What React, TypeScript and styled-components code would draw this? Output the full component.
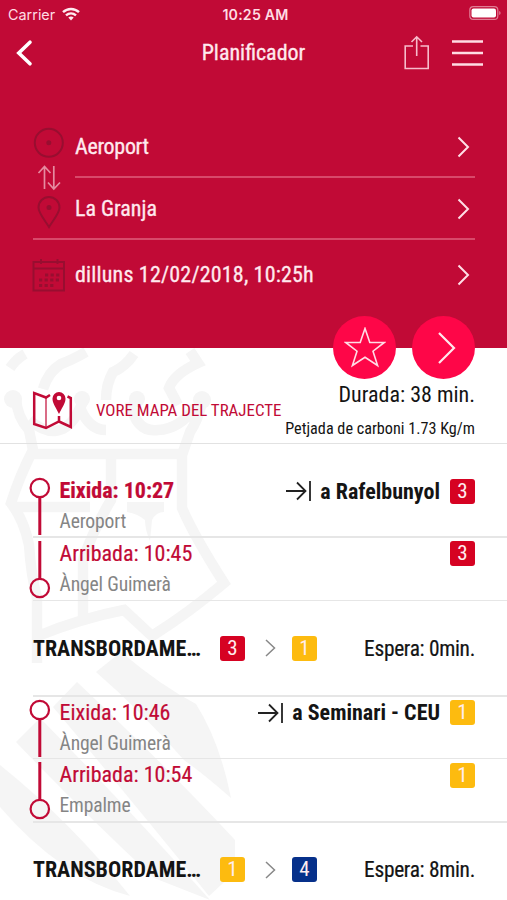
import React from 'react';
import styled, { createGlobalStyle } from 'styled-components';

const Global = createGlobalStyle`
  * { box-sizing: border-box; }
  body { margin: 0; background: #fff; }
`;
const crimson = '#c10a36';

const Screen = styled.div`
  width: 507px; height: 900px; overflow: hidden; position: relative; background: #fff; color: #141414;
  font-family: 'Roboto Condensed', Roboto, sans-serif; font-stretch: 75%; font-size: 22px;
`;
const Header = styled.header`
  height: 348px; background: ${crimson}; color: #ffe9ee;
`;
const StatusBar = styled.div`
  height: 28px; display: grid; grid-template-columns: 1fr auto 1fr; align-items: center; padding: 0 6px 0 8px;
  font-family: Inter, sans-serif; font-stretch: 100%; font-size: 14.4px; color: #ffdce4;
`;
const Carrier = styled.div`display: flex; align-items: center; gap: 7px;`;
const Clock = styled.div`font-weight: 600; font-size: 14.2px; letter-spacing: 0.2px; padding-left: 2px;`;
const Battery = styled.svg`justify-self: end; margin-top: -2px;`;
const NavBar = styled.nav`
  height: 49px; display: grid; grid-template-columns: 60px 1fr 46px 57px; align-items: center;
`;
const BackIcon = styled.svg`margin-left: 15px;`;
const Title = styled.h1`
  margin: 0; text-align: center; font-size: 22px; font-weight: 400; line-height: 48px; padding-left: 43px;
  -webkit-text-stroke: 0.3px;
`;
const Form = styled.section`
  display: grid; grid-template-columns: 42px 1fr; margin: 39px 32px 0 33px; -webkit-text-stroke: 0.3px;
`;
const RouteIcons = styled.svg`margin-left: -1px; grid-row: span 2;`;
const Field = styled.div<{ $h: number; $line?: boolean; $track?: number }>`
  height: ${p => p.$h}px; display: flex; justify-content: space-between; align-items: center;
  padding: ${p => (p.$line ? '1px 5px 0 0' : '0 5px 1px 0')}; letter-spacing: ${p => p.$track ?? 0}px;
  border-bottom: ${p => (p.$line ? '2px solid #d8496a' : '0')};
`;
const Divider = styled.div`grid-column: 1 / -1; height: 2px; background: #d8496a; margin-top: -2px;`;
const CalendarIcon = styled.svg`margin: 19px 0 0 -1px;`;
const Summary = styled.section`
  height: 96px; border-bottom: 1.5px solid #e2e2e2; display: flex; padding-left: 32px; position: relative;
`;
const MapLink = styled.a`
  display: flex; align-items: center; gap: 23px; color: ${crimson}; font-size: 16.9px; padding-top: 29px; white-space: nowrap;
`;
const Totals = styled.div`
  flex: 1; min-width: 0; padding: 33px 32px 0 0; white-space: nowrap;
  display: flex; flex-direction: column; align-items: flex-end;
`;
const Duration = styled.div`font-size: 22px; line-height: 28px;`;
const Carbon = styled.div`font-size: 16.2px; line-height: 20px; margin-top: 10px;`;
const Actions = styled.div`position: absolute; top: -32px; right: 32px; display: flex; gap: 16px;`;
const RoundButton = styled.button`
  width: 63px; height: 63px; border: 0; border-radius: 50%; background: #fe0648; padding: 0; display: grid; place-items: center;
`;
const Content = styled.main`position: relative; z-index: 0; height: 552px;`;
const Watermark = styled.svg`position: absolute; left: 0; top: 0; z-index: -1;`;
const Stop = styled.div<{ $lead?: boolean; $h: number }>`
  height: ${p => p.$h}px; padding: ${p => (p.$lead ? 31 : 0)}px 32px 0 29px; display: flex;
`;
const Rule = styled.div`height: 1.5px; margin-left: 33px; background: #e6e6e6;`;
const Track = styled.svg`flex: none;`;
const Info = styled.div`padding: 2px 0 0 8.5px; white-space: nowrap;`;
const Time = styled.div<{ $bold?: boolean }>`
  color: ${crimson}; font-size: 22px; line-height: 28px; font-weight: ${p => (p.$bold ? 700 : 400)};
  -webkit-text-stroke: 0.2px;
`;
const Station = styled.div`color: #858585; font-size: 19.6px; letter-spacing: -0.15px; line-height: 26px; margin-top: 4px;`;
const Destination = styled.div`
  margin-left: auto; padding-top: 3px; display: flex; align-items: center; height: 29px; font-weight: 700; white-space: nowrap;
`;
const DestName = styled.span`margin: 0 10px 0 9px;`;
const Badge = styled.span<{ $color: string }>`
  width: 25px; height: 25px; border-radius: 3px; background: ${p => p.$color}; color: #ffedf0;
  font-size: 21px; line-height: 25px; text-align: center; font-weight: 400; flex: none;
`;
const Transfer = styled.div`height: 94px; margin-left: 33px; padding-right: 32px; display: flex; align-items: center;`;
const TransferLabel = styled.div`
  width: 170px; margin-right: 17px; font-weight: 700; white-space: nowrap;
`;
const TransferArrow = styled.svg`margin: 0 15px 0 19px;`;
const Wait = styled.div`margin-left: auto; white-space: nowrap; font-size: 21.4px; letter-spacing: -0.3px; -webkit-text-stroke: 0.2px;`;

const RED = '#d60222', YELLOW = '#fdbb0f', NAVY = '#06308a';

const Chevron = () => (
  <svg width="13" height="22" viewBox="0 0 13 22" fill="none" stroke="#ffdfe7" strokeWidth="2"><path d="M1.5 1.5L11 11L1.5 20.5" /></svg>
);

const Departure = ({ time, station, to, line, color, first }: { time: string; station: string; to: string; line: number; color: string; first?: boolean }) => (
  <Stop $lead={first} $h={first ? 92 : 61}>
    <Track width="22" height="61" viewBox="0 0 22 61" fill="none" stroke={crimson}>
      <circle cx="10.8" cy="13" r="9.2" strokeWidth="2.2" /><path d="M10.8 22V60" strokeWidth="3" />
    </Track>
    <Info><Time $bold={first}>Eixida: {time}</Time><Station>{station}</Station></Info>
    <Destination>
      <svg width="26" height="22" viewBox="0 0 26 22" fill="none" stroke="#222" strokeWidth="1.8"><path d="M1 11H20M12 2.5L20.5 11L12 19.5M25 1V21" /></svg>
      <DestName>a {to}</DestName><Badge $color={color}>{line}</Badge>
    </Destination>
  </Stop>
);
const Arrival = ({ time, station, line, color }: { time: string; station: string; line: number; color: string }) => (
  <Stop $h={62}>
    <Track width="22" height="62" viewBox="0 0 22 62" fill="none" stroke={crimson}>
      <circle cx="10.8" cy="50" r="9.2" strokeWidth="2.2" /><path d="M10.8 3V41" strokeWidth="3" />
    </Track>
    <Info><Time>Arribada: {time}</Time><Station>{station}</Station></Info>
    <Destination><Badge $color={color}>{line}</Badge></Destination>
  </Stop>
);
const Change = ({ from, to, wait }: { from: [number, string]; to: [number, string]; wait: string }) => (
  <Transfer>
    <TransferLabel>TRANSBORDAME…</TransferLabel>
    <Badge $color={from[1]}>{from[0]}</Badge>
    <TransferArrow width="13" height="20" viewBox="0 0 13 20" fill="none" stroke="#888" strokeWidth="1.5"><path d="M2 2L10.5 10L2 18" /></TransferArrow>
    <Badge $color={to[1]}>{to[0]}</Badge>
    <Wait>Espera: {wait}</Wait>
  </Transfer>
);

export default function App() {
  return (
    <Screen>
      <Global />
      <Header>
        <StatusBar>
          <Carrier>Carrier
            <svg width="18" height="14" viewBox="0 0 18 14" fill="none" stroke="#ffeaf0" strokeWidth="2.4"><path d="M1 5.2C5.5 .9 12.5 .9 17 5.2M4 8.4C7 5.7 11 5.7 14 8.4" /><path d="M6.3 10.6Q9 8.6 11.7 10.6L9 13.4Z" fill="#ffeaf0" stroke="none" /></svg>
          </Carrier>
          <Clock>10:25 AM</Clock>
          <Battery width="32" height="14" viewBox="0 0 32 14"><rect x=".8" y=".6" width="28" height="12.8" rx="3.5" fill="none" stroke="#e07c94" strokeWidth="1.2" /><rect x="2.5" y="2.4" width="24.5" height="9.2" rx="2" fill="#fff" /><path d="M30.2 5v4q1.4-.7 1.4-2t-1.4-2" fill="#e07c94" /></Battery>
        </StatusBar>
        <NavBar>
          <BackIcon width="18" height="28" viewBox="0 0 18 28" fill="none" stroke="#fff" strokeWidth="3.6" strokeLinecap="round"><path d="M15 3.2L3.8 14L15 24.8" /></BackIcon>
          <Title>Planificador</Title>
          <svg width="26" height="36" viewBox="0 0 26 36" fill="none" stroke="#f7bccb" strokeWidth="1.6"><path d="M9 11H1.2V33.5H24.2V11H16.5M12.7 21V2M7.5 7L12.7 1.8L18 7" /></svg>
          <svg width="36" height="30" viewBox="0 0 36 30" stroke="#ffdce4" strokeWidth="2.5"><path d="M2 3.5H33M2 15H33M2 26.5H33" /></svg>
        </NavBar>
        <Form>
          <RouteIcons width="34" height="122" viewBox="0 0 34 122" fill="none" stroke="#980e30" strokeWidth="2">
            <circle cx="16.8" cy="26.8" r="14" /><circle cx="16.8" cy="26.8" r="2.5" fill="#980e30" stroke="none" />
            <path d="M12.5 73V51M6.5 57L12.5 50.5L18.5 57M21.8 50V72M16 66.5L21.8 73L28 66.5" stroke="#e58ba0" strokeWidth="1.7" />
            <path d="M17 111C12 103 6.5 97 6.5 91.5A10.5 10.5 0 0 1 27.5 91.5C27.5 97 22 103 17 111Z" /><circle cx="17" cy="91.5" r="2.5" fill="#980e30" stroke="none" />
          </RouteIcons>
          <Field $h={62} $line $track={-0.3}>Aeroport<Chevron /></Field>
          <Field $h={62}>La Granja<Chevron /></Field>
          <Divider />
          <CalendarIcon width="34" height="34" viewBox="0 0 34 34" fill="none" stroke="#980e30" strokeWidth="2"><path d="M1.5 3H32V31.5H1.5ZM1.5 9.5H32M9 0V5M25.5 0V5" /><path d="M13 16H29M7 21H29M7 26.5H23" strokeWidth="3.2" strokeDasharray="3.2 2.4" /></CalendarIcon>
          <Field $h={70} $track={0.18}>dilluns 12/02/2018, 10:25h<Chevron /></Field>
        </Form>
      </Header>
      <Content>
        <Watermark width="240" height="552" viewBox="0 348 240 552" fill="none" stroke="#f5f5f5" strokeWidth="10.5">
          <path d="M10 368Q16 359 25 354M43 389Q48 372 61 364Q72 360 86 352M106 400Q106 384 113 372Q125 367 134 354M190 351L198 363Q174 374 169 388L178 405" />
          <g fill="#f5f5f5" stroke="none"><circle cx="13" cy="399" r="9" /><circle cx="202" cy="400" r="9" /><circle cx="82" cy="399" r="8" /><circle cx="137" cy="399" r="8" /></g>
          <path d="M16 398Q17 417 29 430L33 450Q20 475 11 503Q24 520 29 545Q31 575 37 598V663M202 402Q198 420 190 432L182 455V508Q194 536 224 583Q190 612 152 636L124 610Q82 618 38 636M29 420Q58 444 76 416L83 402M81 410Q90 430 106 430M130 402Q136 433 158 430Q180 429 195 407M31 454H184M111 459V500Q93 530 83 560V622M14 507H90" />
          <path d="M127 502H164V512Q156 512 152 520L150 541Q145 530 145 520Q138 514 127 512Z" fill="#f5f5f5" stroke="none" />
          <g fill="#f5f5f5" stroke="none">
            <path d="M96 672L121 652Q160 685 196 704Q220 742 231 798Q205 775 184 760Q140 710 96 672Z" />
            <path d="M77 682L53 707Q119 785 209 896L235 872V840Q170 770 77 682Z" />
            <path d="M40 718L16 742Q83 812 154 878L210 900Q130 810 40 718Z" />
            <path d="M0 765V807Q61 878 130 896Q72 823 0 765Z" />
          </g>
        </Watermark>
        <Summary>
          <MapLink>
            <svg width="41" height="40" viewBox="0 0 41 40" fill="none" stroke={crimson} strokeWidth="2.5"><path d="M18 5L14 7.5L2.2 3V34L14 38L27 31.5L38.8 37V8L35.5 6.5M27 31V26" /><path d="M14 7V38" strokeWidth="1.2" /><path d="M27 24C23 16 20.5 13 20.5 8.5A6.5 6.5 0 0 1 33.5 8.5C33.5 13 31 16 27 24Z" fill={crimson} stroke="none" /><circle cx="27" cy="8" r="2.3" fill="#fff" stroke="none" /></svg>
            VORE MAPA DEL TRAJECTE
          </MapLink>
          <Totals><Duration>Durada: 38 min.</Duration><Carbon>Petjada de carboni 1.73 Kg/m</Carbon></Totals>
          <Actions>
            <RoundButton><svg width="42" height="42" viewBox="0 0 42 42" fill="none" stroke="#ffdce5" strokeWidth="1.6"><path d="M21 1.5L25.8 15.5H40.3L29 24.2L33.6 38.5L21 30.3L8.4 38.5L13 24.2L1.7 15.5H16.2Z" /></svg></RoundButton>
            <RoundButton><svg width="24" height="34" viewBox="0 0 24 34" fill="none" stroke="#ffe7ed" strokeWidth="2.2"><path d="M7 2L22 17L7 32" /></svg></RoundButton>
          </Actions>
        </Summary>
        <Departure first time="10:27" station="Aeroport" to="Rafelbunyol" line={3} color={RED} />
        <Rule />
        <Arrival time="10:45" station="Àngel Guimerà" line={3} color={RED} />
        <Rule />
        <Change from={[3, RED]} to={[1, YELLOW]} wait="0min." />
        <Rule />
        <Departure time="10:46" station="Àngel Guimerà" to="Seminari - CEU" line={1} color={YELLOW} />
        <Rule />
        <Arrival time="10:54" station="Empalme" line={1} color={YELLOW} />
        <Rule />
        <Change from={[1, YELLOW]} to={[4, NAVY]} wait="8min." />
      </Content>
    </Screen>
  );
}
